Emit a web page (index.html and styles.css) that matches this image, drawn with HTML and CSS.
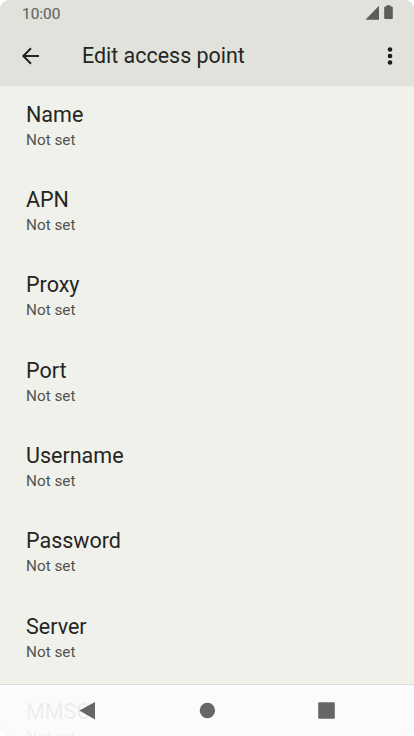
FILE: index.html
```html
<!DOCTYPE html>
<html lang="en">
<head>
<meta charset="utf-8">
<title>Edit access point</title>
<link rel="stylesheet" href="styles.css">
</head>
<body>
<div class="screen">
  <header class="top">
    <div class="status">
      <span class="time">10:00</span>
      <svg class="status-icons" width="29" height="16" viewBox="0 0 29 16"><path d="M0.400 14.700L14 .8v13.900z"/><path d="M21.500 1.500V.3h4v1.200h1.300q1 0 1 1v10.600q0 1-1 1h-6.600q-1 0-1-1V2.500q0-1 1-1z"/></svg>
    </div>
    <div class="bar">
      <svg class="back" width="20" height="20" viewBox="0 0 20 20"><path d="M19 10H3.500M11 2.300L3.300 10l7.700 7.700"/></svg>
      <h1>Edit access point</h1>
      <svg class="more" width="6" height="20" viewBox="0 0 6 20"><circle cx="3" cy="3.500" r="2.300"/><circle cx="3" cy="10" r="2.300"/><circle cx="3" cy="16.500" r="2.300"/></svg>
    </div>
  </header>
  <main class="list">
    <div class="item"><h2>Name</h2><p>Not set</p></div>
    <div class="item"><h2>APN</h2><p>Not set</p></div>
    <div class="item"><h2>Proxy</h2><p>Not set</p></div>
    <div class="item"><h2>Port</h2><p>Not set</p></div>
    <div class="item"><h2>Username</h2><p>Not set</p></div>
    <div class="item"><h2>Password</h2><p>Not set</p></div>
    <div class="item"><h2>Server</h2><p>Not set</p></div>
    <div class="item"><h2>MMSC</h2><p>Not set</p></div>
  </main>
  <nav class="nav">
    <svg width="18" height="20" viewBox="0 0 18 20"><path d="M1.300 9.600L17 .9v17.600z"/></svg>
    <svg width="18" height="20" viewBox="0 0 18 20"><circle cx="9.400" cy="9.500" r="7.700"/></svg>
    <svg width="18" height="20" viewBox="0 0 18 20"><rect x=".2" y="1.200" width="16.600" height="16.600" rx="1.200"/></svg>
  </nav>
</div>
</body>
</html>
```
FILE: styles.css
```css
* { box-sizing: border-box; }
body { margin: 0; background: #fff; font-family: Roboto, sans-serif; color: #242522; }
.screen { position: relative; width: 414px; height: 736px; overflow: hidden; background: #f0f1eb; border-radius: 9px; }
.top { height: 86px; background: #e1e2dc; }
.status { display: flex; justify-content: space-between; height: 26px; padding: 5px 20px 0 22px; }
.status-icons { fill: #5c5d5a; }
.time { font-size: 15.400px; line-height: 18px; color: #666763; font-weight: 400; -webkit-text-stroke: 0.2px #666763; }
.bar { display: flex; align-items: center; height: 60px; padding: 0 21px 0 20px; }
.back { fill: none; stroke: #242522; stroke-width: 2; }
.more { fill: #1b1c19; }
.bar h1 { flex: 1; margin: 0 0 0 42px; font-size: 21.450px; line-height: 28px; font-weight: 400; }
.item { height: 85.350px; padding: 14.600px 26px 0; }
.item h2 { margin: 0; font-size: 21.500px; line-height: 28px; font-weight: 400; }
.item p { margin: 1px 0 0; font-size: 15.300px; line-height: 20px; color: #51534e; }
.nav { position: absolute; left: 0; right: 0; bottom: 0; height: 52px; display: flex; gap: 102px; padding: 16px 0 0 78px; background: rgba(252,252,252,.93); border-top: 1px solid #d9dad5; fill: #666; }
```
